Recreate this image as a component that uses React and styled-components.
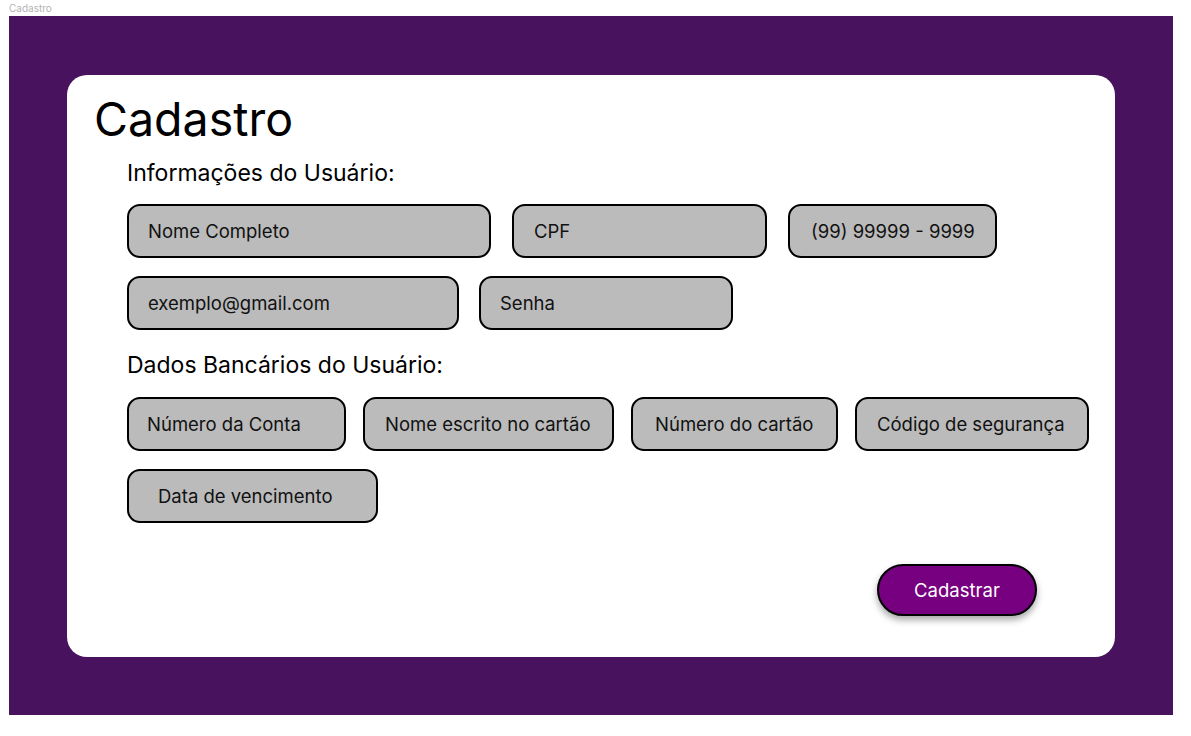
import React from 'react';
import styled, { createGlobalStyle } from 'styled-components';

const Global = createGlobalStyle`
  body {
    margin: 0;
    background: #ffffff;
    font-family: Inter, "Noto Sans", sans-serif;
  }
`;

const Page = styled.div`
  width: 1191px;
  height: 736px;
  padding-left: 9px;
  box-sizing: border-box;
`;

const FrameLabel = styled.div`
  height: 16px;
  font-size: 10px;
  line-height: 16px;
  color: #b3b3b3;
`;

const Frame = styled.div`
  width: 1164px;
  height: 699px;
  background: #48125e;
  padding: 59px 0 0 58px;
  box-sizing: border-box;
`;

const Card = styled.div`
  width: 1048px;
  height: 582px;
  background: #ffffff;
  border-radius: 20px;
  padding: 15px 0 0 27px;
  box-sizing: border-box;
  display: flex;
  flex-direction: column;
`;

const Title = styled.h1`
  margin: 0;
  font-size: 46.5px;
  font-weight: 400;
  line-height: 58px;
  color: #000;
`;

const Section = styled.div`
  margin-left: 33px;
  margin-top: ${p => p.top}px;
  display: flex;
  flex-direction: column;
`;

const Heading = styled.h2`
  margin: 0 0 ${p => p.gap}px 0;
  font-size: 23px;
  font-weight: 400;
  line-height: 27px;
  color: #000;
`;

const Row = styled.div`
  display: flex;
  gap: ${p => p.gap}px;
  margin-bottom: 18px;
  &:last-child {
    margin-bottom: 0;
  }
`;

const Field = styled.div`
  width: ${p => p.w}px;
  height: 54px;
  box-sizing: border-box;
  background: #bbbbbb;
  border: 2px solid #000;
  border-radius: 13px;
  padding-left: ${p => p.pad - 2}px;
  display: flex;
  align-items: center;
  font-size: 18.5px;
  color: #111;
`;

const Footer = styled.div`
  display: flex;
  justify-content: flex-end;
  padding-right: 78px;
  margin-top: 41px;
`;

const Button = styled.button`
  width: 160px;
  height: 52px;
  border-radius: 26px;
  border: 2px solid #000;
  background: #770080;
  color: #fff;
  font-family: Inter, "Noto Sans", sans-serif;
  font-size: 18.5px;
  box-shadow: 0 4px 7px rgba(0, 0, 0, 0.35);
  cursor: pointer;
`;

const userRows = [
  { gap: 21, fields: [['Nome Completo', 364, 21], ['CPF', 255, 22], ['(99) 99999 - 9999', 209, 23]] },
  { gap: 20, fields: [['exemplo@gmail.com', 332, 21], ['Senha', 254, 21]] },
];

const bankRows = [
  {
    gap: 17,
    fields: [
      ['Número da Conta', 219, 20],
      ['Nome escrito no cartão', 251, 22],
      ['Número do cartão', 207, 24],
      ['Código de segurança', 234, 22],
    ],
  },
  { gap: 17, fields: [['Data de vencimento', 251, 31]] },
];

const renderRows = rows =>
  rows.map((row, i) => (
    <Row key={i} gap={row.gap}>
      {row.fields.map(([label, w, pad]) => (
        <Field key={label} w={w} pad={pad}>{label}</Field>
      ))}
    </Row>
  ));

const App = () => {
  return (
    <>
      <Global />
      <Page>
        <FrameLabel>Cadastro</FrameLabel>
        <Frame>
          <Card>
            <Title>Cadastro</Title>
            <Section top={12}>
              <Heading gap={17}>Informações do Usuário:</Heading>
              {renderRows(userRows)}
            </Section>
            <Section top={22}>
              <Heading gap={18}>Dados Bancários do Usuário:</Heading>
              {renderRows(bankRows)}
            </Section>
            <Footer>
              <Button>Cadastrar</Button>
            </Footer>
          </Card>
        </Frame>
      </Page>
    </>
  );
};

export default App;
